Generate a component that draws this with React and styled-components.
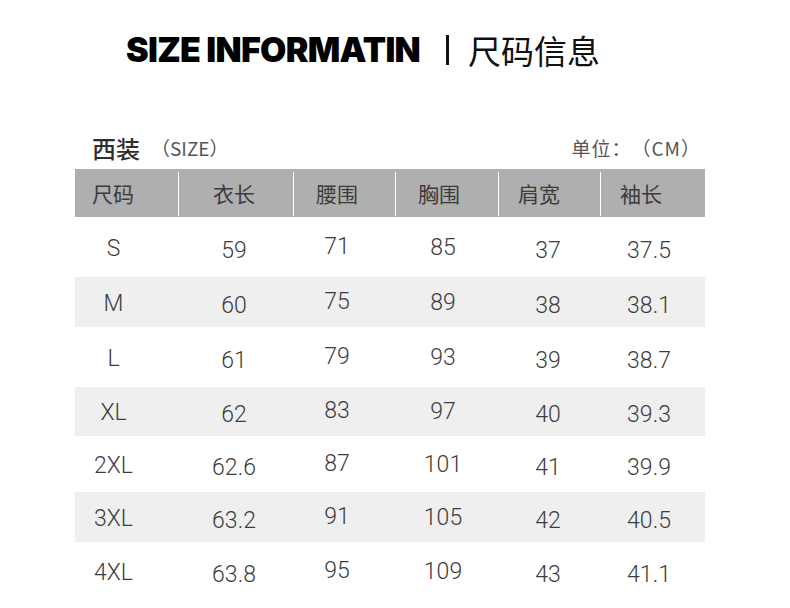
import React from "react";
import styled, { createGlobalStyle } from "styled-components";

const Global = createGlobalStyle`
  html, body { margin: 0; padding: 0; background: #fff; }
  body { width: 790px; height: 608px; overflow: hidden; font-family: "Liberation Sans", Arial, sans-serif; }
`;

const Page = styled.div`
  width: 790px;
  padding-top: 30px;
  box-sizing: border-box;
`;

const TitleRow = styled.div`
  display: flex;
  align-items: center;
  height: 40px;
  padding-left: 126px;
`;

const TitleEn = styled.div`
  font-family: Inter, "Liberation Sans", sans-serif;
  font-weight: 900;
  font-size: 34px;
  letter-spacing: -0.7px;
  color: #000;
  line-height: 1;
`;

const TitleBar = styled.span`
  width: 3px;
  height: 30px;
  background: #111;
  margin: 0 19px 0 26px;
`;

const TitleCn = styled.div`
  font-family: "Noto Sans CJK SC", sans-serif;
  font-size: 33px;
  font-weight: 400;
  color: #111;
  line-height: 1;
`;

const Card = styled.div`
  margin: 62px 0 0 75px;
  width: 630px;
`;

const SubRow = styled.div`
  display: flex;
  align-items: center;
  height: 30px;
  margin-bottom: 7px;
  font-family: "Noto Sans CJK SC", sans-serif;
  text-spacing-trim: space-all;
`;

const SubName = styled.span`
  font-size: 24px;
  font-weight: 500;
  color: #2e2e2e;
  margin-left: 17px;
`;

const SubTag = styled.span`
  font-size: 19px;
  color: #555;
  margin-left: 11px;
`;

const Unit = styled.span`
  margin-left: auto;
  margin-right: 4px;
  font-size: 19px;
  letter-spacing: 1px;
  color: #555;
`;

const cols = "103px 115px 102px 103px 102px 105px";

const Header = styled.div`
  display: grid;
  grid-template-columns: ${cols};
  height: 48px;
  background: #afafaf;
`;

const HeadCell = styled.div`
  display: flex;
  align-items: center;
  margin: 3px 0 1px;
  padding-left: ${(p) => p.$pad}px;
  padding-bottom: 3px;
  border-left: ${(p) => (p.$first ? "none" : "1px solid #fff")};
  font-family: "Noto Sans CJK SC", sans-serif;
  font-size: 21px;
  color: #3b3b3b;
`;

const Row = styled.div`
  display: grid;
  grid-template-columns: ${cols};
  height: ${(p) => p.$h}px;
  background: ${(p) => (p.$striped ? "#efefef" : "#fff")};
`;

const Cell = styled.div`
  display: flex;
  align-items: center;
  justify-content: center;
  box-sizing: border-box;
  padding-left: ${(p) => Math.max(0, p.$dx * 2)}px;
  padding-right: ${(p) => Math.max(0, -p.$dx * 2)}px;
  padding-top: ${(p) => Math.max(0, p.$dy * 2)}px;
  padding-bottom: ${(p) => Math.max(0, -p.$dy * 2)}px;
  font-family: Roboto, "Liberation Sans", sans-serif;
  font-weight: 300;
  font-size: 23px;
  color: #3c3c3c;
`;

const headers = [
  { t: "尺码", pad: 17 },
  { t: "衣长", pad: 34 },
  { t: "腰围", pad: 22 },
  { t: "胸围", pad: 22 },
  { t: "肩宽", pad: 19 },
  { t: "袖长", pad: 19 },
];

const shifts = [
  { dx: -13, dy: 1 },
  { dx: -1.5, dy: 3 },
  { dx: -7, dy: -1 },
  { dx: -3.5, dy: 0 },
  { dx: -1, dy: 3 },
  { dx: -3.5, dy: 3 },
];

const rows = [
  { h: 60, v: ["S", "59", "71", "85", "37", "37.5"] },
  { h: 50, v: ["M", "60", "75", "89", "38", "38.1"] },
  { h: 60, v: ["L", "61", "79", "93", "39", "38.7"] },
  { h: 49, v: ["XL", "62", "83", "97", "40", "39.3"] },
  { h: 56, v: ["2XL", "62.6", "87", "101", "41", "39.9"] },
  { h: 50, v: ["3XL", "63.2", "91", "105", "42", "40.5"] },
  { h: 58, v: ["4XL", "63.8", "95", "109", "43", "41.1"] },
];

export default function App() {
  return (
    <Page>
      <Global />
      <TitleRow>
        <TitleEn>SIZE INFORMATIN</TitleEn>
        <TitleBar />
        <TitleCn>尺码信息</TitleCn>
      </TitleRow>
      <Card>
        <SubRow>
          <SubName>西装</SubName>
          <SubTag>（SIZE）</SubTag>
          <Unit>单位：（CM）</Unit>
        </SubRow>
        <Header>
          {headers.map((h, i) => (
            <HeadCell key={h.t} $pad={h.pad} $first={i === 0}>
              {h.t}
            </HeadCell>
          ))}
        </Header>
        {rows.map((r, ri) => (
          <Row key={r.v[0]} $h={r.h} $striped={ri % 2 === 1}>
            {r.v.map((v, ci) => (
              <Cell key={ci} $dx={shifts[ci].dx} $dy={shifts[ci].dy}>
                {v}
              </Cell>
            ))}
          </Row>
        ))}
      </Card>
    </Page>
  );
}
